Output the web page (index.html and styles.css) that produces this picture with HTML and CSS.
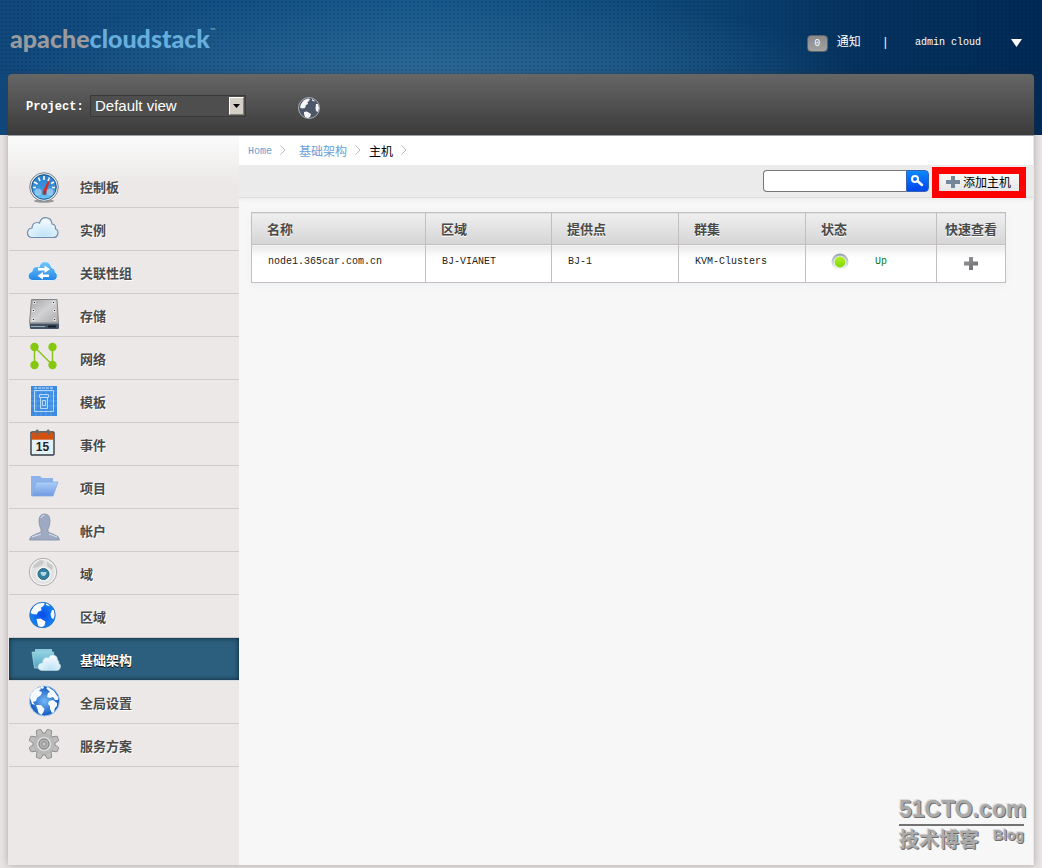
FILE: index.html
```html
<!DOCTYPE html>
<html lang="zh-CN">
<head>
<meta charset="utf-8">
<title>Apache CloudStack</title>
<link rel="stylesheet" href="styles.css">
</head>
<body>
<svg class="defs" width="0" height="0" aria-hidden="true">
  <defs>
    <linearGradient id="gBlue" x1="0" y1="0" x2="0" y2="1"><stop offset="0" stop-color="#2a7cc8"/><stop offset=".6" stop-color="#3f95dc"/><stop offset="1" stop-color="#72cdf8"/></linearGradient>
    <linearGradient id="gMetal" x1="0" y1="0" x2="1" y2="1"><stop offset="0" stop-color="#a5a5a8"/><stop offset=".5" stop-color="#d2d2d5"/><stop offset="1" stop-color="#aaaaad"/></linearGradient>
    <radialGradient id="gCloud" cx=".55" cy=".9" r=".8"><stop offset="0" stop-color="#bfe3f7"/><stop offset="1" stop-color="#f4fafd"/></radialGradient>
    <linearGradient id="gCloudBlue" x1="0" y1="0" x2="0" y2="1"><stop offset="0" stop-color="#74cbfa"/><stop offset="1" stop-color="#2484e6"/></linearGradient>
    <linearGradient id="gFolder" x1="0" y1="0" x2="0" y2="1"><stop offset="0" stop-color="#acd0f8"/><stop offset="1" stop-color="#7099e2"/></linearGradient>
    <linearGradient id="gTeal" x1="0" y1="0" x2="0" y2="1"><stop offset="0" stop-color="#8fd0e0"/><stop offset="1" stop-color="#56a6c1"/></linearGradient>
    <radialGradient id="gGlobe"><stop offset="0" stop-color="#0a4be8"/><stop offset="1" stop-color="#1787f5"/></radialGradient>
    <radialGradient id="gGlobe2"><stop offset="0" stop-color="#75b9f8"/><stop offset="1" stop-color="#1156bd"/></radialGradient>
    <linearGradient id="gRing" x1="0" y1="0" x2="0" y2="1"><stop offset="0" stop-color="#98a3ac"/><stop offset="1" stop-color="#fff"/></linearGradient>
    <linearGradient id="gGreen" x1="0" y1="0" x2="0" y2="1"><stop offset="0" stop-color="#b5f024"/><stop offset="1" stop-color="#7fd908"/></linearGradient>
    <linearGradient id="gPlus" x1="0" y1="0" x2="1" y2="1"><stop offset="0" stop-color="#9a9a9d"/><stop offset="1" stop-color="#68696e"/></linearGradient>
    <path id="tooth" d="M15 7l.8-4q.2-.8 1-.8h2.400q.8 0 1 .8l.8 4z"/>
    <g id="teeth"><use href="#tooth" transform="rotate(22.500 18 17)"/><use href="#tooth" transform="rotate(67.500 18 17)"/><use href="#tooth" transform="rotate(112.500 18 17)"/><use href="#tooth" transform="rotate(157.500 18 17)"/><use href="#tooth" transform="rotate(202.500 18 17)"/><use href="#tooth" transform="rotate(247.500 18 17)"/><use href="#tooth" transform="rotate(292.500 18 17)"/><use href="#tooth" transform="rotate(337.500 18 17)"/></g>
  </defs>
</svg>

<div class="page">
  <header class="header">
    <a class="logo" href="#"><span class="logo-a">apache</span><span class="logo-b">cloudstack</span><span class="logo-tm">™</span></a>
    <div class="user">
      <button class="notify" type="button"><span class="badge">0</span><span class="notify-label">通知</span></button>
      <span class="divider">|</span>
      <button class="account" type="button"><span>admin cloud</span>
        <svg width="11" height="8" viewBox="0 0 11 8" aria-hidden="true"><path d="M0 0h11L5.500 8z" fill="#fff"/></svg>
      </button>
    </div>
  </header>

  <div class="shell">
    <div class="toolbar">
      <label class="project-label" for="project">Project:</label>
      <div class="select-box">
        <select id="project" class="project"><option>Default view</option></select>
        <span class="select-arrow"><svg width="7" height="4" viewBox="0 0 7 4" aria-hidden="true"><path d="M0 0h7L3.500 4z"/></svg></span>
      </div>
      <button class="region" type="button" aria-label="Region">
        <svg width="24" height="24" viewBox="0 0 24 24"><circle cx="12" cy="12" r="10.500" fill="#4c5868" stroke="#a5abb4"/><path d="M4 8l3-4 4-1.500 2 .5-1 2-1.500 1 .5 2-2 1-1 3-3 .5-2-1zM7 16l3-.5 4 2.500-1 3-2 1-3-1-1-3zM19 8l2 0 1 4-1 4-2-1-.500-3zM15 3l3 2-1 .5-2-1z" fill="#f5f6f8"/></svg>
      </button>
    </div>

    <div class="body">
      <nav class="sidebar">
        <ul class="nav">
          <li><a href="#"><svg class="ico" viewBox="0 -2 36 36"><ellipse cx="18" cy="31" rx="10" ry="1.800" fill="#999"/><circle cx="18" cy="17" r="14.300" fill="#e6e9ec" stroke="#7c858e"/><circle cx="18" cy="17" r="12.300" fill="url(#gBlue)" stroke="#19568e"/><path d="M18 6v4M12.500 7.500l1.500 3.500M23.500 7.500L22 11M8 12l3.500 2M7 17.500h3M29 17.500h-3M28 12l-3 1.500" stroke="#fff" stroke-width="1.600"/><circle cx="12" cy="22" r="3.500" fill="#a6d4f4" opacity=".7"/><circle cx="24" cy="22" r="3.500" fill="#a6d4f4" opacity=".7"/><path d="M16.500 22L22 11l1.500.8-3.500 11z" fill="#d72d26"/><circle cx="18.500" cy="23" r="2" fill="#963b45"/></svg><span>控制板</span></a></li>
          <li><a href="#"><svg class="ico" viewBox="0 0 36 36"><path d="M5.500 26.500Q1.500 26 1.500 21.500 2 17.500 6 17q.2-5.500 5.500-5.500 1 0 2 .6Q15 6.500 20 6.700q5.500.6 6 6.300 4 .5 3.500 5 3 1 2.300 5-.8 3.500-4.300 3.500z" fill="url(#gCloud)" stroke="#6f8dad" stroke-width="1.200"/></svg><span>实例</span></a></li>
          <li><a href="#"><svg class="ico" viewBox="0 0 36 36"><path d="M6 26.500Q2 26 2 22q.5-4 4-4.500.5-5 5-5 1 0 2 .6Q14.500 7.500 19 7.500q5.500.5 6.500 6 4 .5 4 5 2.500 1 1.800 4.500-.8 3.500-4 3.500z" fill="url(#gCloudBlue)" stroke="#e5f4fc"/><path d="M12 14h6.500v-2.500L24 15.200 18.500 19v-2.500H12zM23 20.500h-6V18l-5.500 3.700L17 25.500V23h6z" fill="#fff"/></svg><span>关联性组</span></a></li>
          <li><a href="#"><svg class="ico" viewBox="0 0 36 36"><path d="M5.500 2.500h25.500l1.500 23.500h-29z" fill="url(#gMetal)" stroke="#858588"/><path d="M3.500 26.500H33V31q0 1-1 1H5q-1 0-1-1z" fill="#445363"/><path d="M5 29.500h14" stroke="#99abb9"/><path d="M22 29.500h8" stroke="#131d27" stroke-width="2"/><g fill="#fff"><circle cx="8.500" cy="5.500" r="1.500"/><circle cx="27.500" cy="5.500" r="1.500"/><circle cx="7.500" cy="13.500" r="1.500"/><circle cx="28.500" cy="13.500" r="1.500"/><circle cx="7.500" cy="22.500" r="1.500"/><circle cx="28.500" cy="22.500" r="1.500"/></g><g fill="#333"><circle cx="8.500" cy="5.500" r=".8"/><circle cx="27.500" cy="5.500" r=".8"/><circle cx="7.500" cy="13.500" r=".8"/><circle cx="28.500" cy="13.500" r=".8"/><circle cx="7.500" cy="22.500" r=".8"/><circle cx="28.500" cy="22.500" r=".8"/></g></svg><span>存储</span></a></li>
          <li><a href="#"><svg class="ico" viewBox="0 -1 36 36"><path d="M8.500 24V6l18 18V6" fill="none" stroke="#88c51a" stroke-width="1.500"/><g fill="#86c80d"><circle cx="8.500" cy="6" r="4.200"/><circle cx="26.500" cy="6" r="4.200"/><circle cx="8.500" cy="24" r="4.200"/><circle cx="26.500" cy="24" r="4.200"/></g></svg><span>网络</span></a></li>
          <li><a href="#"><svg class="ico" viewBox="-1 -2 36 36"><path d="M4 1h26v30H4z" fill="#3d8ae0"/><path d="M4 6h26M4 11h26M4 16h26M4 21h26M9 1v30M14 1v30M19 1v30M24 1v30" stroke="#64a9ee" stroke-width=".7"/><path d="M7.500 5.500h19v21h-19zM12.500 9.500h9v3h-9zM13.500 12.500h7v11h-7zM15.500 15.500h3v5h-3z" fill="none" stroke="#b5daf8"/><path d="M7 3h20" stroke="#cbe6fb" stroke-dasharray="3 1"/></svg><span>模板</span></a></li>
          <li><a href="#"><svg class="ico" viewBox="-1 -3 36 36"><rect x="4" y="3" width="23" height="23" rx="1" fill="#e4f1f9" stroke="#343c42" stroke-width="1.400"/><path d="M4.700 3.700h21.600v7H4.700z" fill="#d4500e"/><path d="M9 2q2-2 2 1t-2 3M20 2q2-2 2 1t-2 3" fill="none" stroke="#716764" stroke-width="1.600"/><text x="15.500" y="22" text-anchor="middle" class="cal">15</text></svg><span>事件</span></a></li>
          <li><a href="#"><svg class="ico" viewBox="-1 -2 36 36"><path d="M4 5h9l2 2h11v18H4z" fill="#8db3ea"/><path d="M9 11h22l-5 14H5z" fill="url(#gFolder)" stroke="#86aae3" stroke-width=".8"/></svg><span>项目</span></a></li>
          <li><a href="#"><svg class="ico" viewBox="-1 -1 36 36"><path d="M12 8q0-7 5.500-7T23 8q0 5-2 8v3l7 3q4 1 4.500 5h-30Q3 23 7 22l7-3v-3q-2-3-2-8z" fill="#9daac2" stroke="#8290a8" stroke-width=".8"/><path d="M14 5q1-3 3.500-3M5 24l9-3M30 24l-8-3" stroke="#dce2ec" fill="none"/></svg><span>帐户</span></a></li>
          <li><a href="#"><svg class="ico" viewBox="-1 -1 36 36"><circle cx="16" cy="16" r="13.700" fill="#e2e2e2" stroke="#acacac"/><circle cx="16" cy="16" r="12.500" fill="none" stroke="#f6f6f6"/><path d="M7 9l6-5 4 1-2 4-4 2-5 1zM20 6l6 4-1 4-5-4z" fill="#c8c8c8"/><circle cx="16.500" cy="18" r="7.500" fill="#f5f5f5" opacity=".8"/><circle cx="16.500" cy="18" r="5.500" fill="#36809f" stroke="#276780"/><path d="M13.500 16h6q-.5 4-3 4t-3-4z" fill="#b4dbe8"/></svg><span>域</span></a></li>
          <li><a href="#"><svg class="ico" viewBox="-1 -1 36 36"><circle cx="15.500" cy="16" r="13" fill="url(#gGlobe)"/><path d="M4 12l3-5 4-3 5-.5 2 1-2 3-2 1 .5 3-3 1-2 3-4-.5-2-1zM9.500 20l4-.500 5 3-1 4-3 2-3-1-1-3zM25 11l2 0 1 5-1.500 4-2-1-1-4zM19 4l4 2-1 1-3-1z" fill="#f8fbff"/><circle cx="15.500" cy="16" r="12.600" fill="none" stroke="#286db1" stroke-width=".8"/></svg><span>区域</span></a></li>
          <li class="active"><a href="#"><svg class="ico" viewBox="0 -3 36 36"><path d="M9 7V5h17v3H9z" fill="#8ccbdc"/><path d="M6 8h21.500l1.500 16H8.500z" fill="url(#gTeal)" stroke="#9cd6e3" stroke-width=".8"/><path d="M15.500 26.500q-3.500-.5-3.500-4 .5-3.500 4.500-3.500.5-5.500 4.500-5.500 1 0 1.500.5Q24 10.500 27 11q4.500.5 4.500 5 1.500.5 1.500 3.500 2 1 1.500 3.500-.8 3.500-3.500 3.500z" fill="url(#gCloud)" stroke="#b9d6e4" stroke-width=".6"/></svg><span>基础架构</span></a></li>
          <li><a href="#"><svg class="ico" viewBox="-1 0 36 36"><circle cx="17.500" cy="17" r="15" fill="url(#gGlobe2)" stroke="#9fc6ed"/><path d="M4 10l4-5 5-2 1 2-2 2 3 1-1 3-4 3-1 3-3 1 2 3-3-1-2-6zM9 21l5 0 3.500 4-1 3-2 3-3-2-1-4zM19 4l2-1 6 4 4 6 0 3-3 0-2-3-3 1-3-1 1-4 2-1zM22 17l4-1 4 3 0 3-2 2-1 4-2 1-2-4 0-3-2-2zM13 3l3-1 1 2-2 1z" fill="#f5fafe"/></svg><span>全局设置</span></a></li>
          <li><a href="#"><svg class="ico" viewBox="0 0 36 36"><use href="#teeth" fill="#bbb" stroke="#868686" stroke-width="1.600"/><circle cx="18" cy="17" r="11" fill="#bbb" stroke="#868686"/><use href="#teeth" fill="#bdbdbd"/><circle cx="18" cy="17" r="10.500" fill="#b8b8b8"/><circle cx="18" cy="17" r="6.500" fill="none" stroke="#e3e3e3" stroke-width="1.200"/><circle cx="18" cy="17" r="5" fill="#b4b4b4" stroke="#838383"/><circle cx="18" cy="17" r="2.200" fill="#ccc" stroke="#858585"/></svg><span>服务方案</span></a></li>
        </ul>
      </nav>

      <main class="content">
        <nav class="crumbs">
          <a href="#" class="crumb-home">Home</a>
          <svg class="sep" viewBox="0 0 6 10"><path d="M.5 .5L5 5 .5 9.500"/></svg>
          <a href="#">基础架构</a>
          <svg class="sep" viewBox="0 0 6 10"><path d="M.5 .5L5 5 .5 9.500"/></svg>
          <span class="current">主机</span>
          <svg class="sep" viewBox="0 0 6 10"><path d="M.5 .5L5 5 .5 9.500"/></svg>
        </nav>
        <div class="actions">
          <form class="search">
            <input class="search-input" type="text" aria-label="搜索">
            <button class="search-btn" type="button" aria-label="搜索"><svg width="14" height="14" viewBox="0 0 14 14"><circle cx="5" cy="5" r="3" fill="none" stroke="#fff" stroke-width="2"/><path d="M7.500 7L12 11" stroke="#fff" stroke-width="2.500" stroke-linecap="round"/></svg></button>
          </form>
          <div class="highlight">
            <button class="add" type="button"><svg width="14" height="12" viewBox="0 0 14 12"><path d="M5 0h4v4h5v4H9v4H5V8H0V4h5z" fill="#75879b"/></svg><span>添加主机</span></button>
          </div>
        </div>
        <table class="grid">
          <colgroup><col><col class="c-zone"><col class="c-pod"><col class="c-pod"><col class="c-state"><col class="c-view"></colgroup>
          <thead><tr><th>名称</th><th>区域</th><th>提供点</th><th>群集</th><th>状态</th><th class="view">快速查看</th></tr></thead>
          <tbody><tr>
            <td>node1.365car.com.cn</td><td>BJ-VIANET</td><td>BJ-1</td><td>KVM-Clusters</td>
            <td><div class="state"><svg width="18" height="18" viewBox="0 0 18 18"><circle cx="9" cy="9" r="8.500" fill="url(#gRing)"/><circle cx="9" cy="9" r="6.200" fill="#e6eee4"/><circle cx="9" cy="9" r="5.400" fill="url(#gGreen)"/></svg><span>Up</span></div></td>
            <td class="view"><button class="quick" type="button" aria-label="快速查看"><svg width="14" height="13" viewBox="0 0 14 13"><path d="M5 0h4v4.500h5v4H9V13H5V8.500H0v-4h5z" fill="url(#gPlus)"/></svg></button></td>
          </tr></tbody>
        </table>
      </main>
    </div>
  </div>
</div>

<div class="watermark">
  <div class="wm-top">51CTO.com</div>
  <div class="wm-bottom"><span class="wm-cn">技术博客</span><span class="wm-blog">Blog</span></div>
</div>
</body>
</html>
```

FILE: styles.css
```css
* { box-sizing: border-box; }

body {
  margin: 0;
  background: #e8e4e4;
  color: #222;
  font: 12px/16px "Liberation Mono", "Noto Sans CJK SC", monospace;
}

a { text-decoration: none; color: inherit; }
button { border: 0; padding: 0; background: none; color: inherit; font: inherit; cursor: pointer; }
svg { display: block; flex: none; }
.defs { position: absolute; }

.page {
  display: flex;
  flex-direction: column;
  min-height: 100vh;
  padding-bottom: 3px;
  background:
    radial-gradient(ellipse 430px 90px at 41% 80px, rgba(62, 120, 162, .6), transparent) 0 0 / 100% 135px no-repeat,
    linear-gradient(90deg, #10487c, #14568a 40%, #0e4a7b 62%, #05335f 82%, #002a56) 0 0 / 100% 135px no-repeat;
}

/* Header */
.header {
  display: flex;
  justify-content: space-between;
  align-items: center;
  height: 74px;
  padding: 11px 20px 0 10px;
  color: #fff;
  background: radial-gradient(circle, rgba(0, 20, 50, .16) 1px, transparent 1px) 0 0 / 4px 4px;
}
.logo { display: flex; align-items: flex-start; font: 900 25px/32px Lato, sans-serif; padding-bottom: 9px; }
.logo-a { color: #9a9b9e; }
.logo-b { color: #68aedd; }
.logo-tm { color: #7795ac; font-size: 7px; line-height: 16px; }

.user { display: flex; align-items: center; padding-top: 1px; }
.notify { display: flex; align-items: center; gap: 9px; }
.badge {
  width: 21px;
  height: 17px;
  border: 1px solid #5f6367;
  border-radius: 4px;
  background: linear-gradient(#8a8a8a, #a2a2a2);
  font-size: 10px;
  line-height: 15px;
  text-align: center;
}
.divider { margin: 0 26px 0 21px; }
.account { display: flex; align-items: center; gap: 30px; font-size: 10px; }

/* Shell */
.shell { display: flex; flex-direction: column; flex: 1; margin: 0 8px; box-shadow: 0 0 7px rgba(60, 50, 50, .35); border-radius: 4px 4px 0 0; }
.toolbar {
  display: flex;
  align-items: center;
  height: 62px;
  padding: 2px 18px 0;
  border-bottom: 1px solid #9ba0a4;
  border-radius: 4px 4px 0 0;
  background: linear-gradient(#666, #3b3b3b);
  color: #fff;
}
.project-label { width: 64px; padding-top: 2px; font-size: 12px; font-weight: 700; }
.select-box { position: relative; width: 156px; height: 22px; }
.project {
  width: 100%;
  height: 100%;
  padding: 0 20px 0 4px;
  appearance: none;
  border: 1px solid #393939;
  border-radius: 0;
  background: #4e4e4e;
  color: #fff;
  font: 15px/20px "Liberation Sans", Arial, sans-serif;
}
.select-arrow {
  position: absolute;
  top: 2px;
  right: 2px;
  bottom: 2px;
  display: grid;
  place-items: center;
  width: 15px;
  border: 1px solid;
  border-color: #fff #85817a #85817a #fff;
  background: #d4d0c8;
  pointer-events: none;
}
.region { margin: 4px 0 0 51px; }

.body { display: flex; flex: 1; padding-right: 1px; background: #ebe8e8; }

/* Navigation */
.sidebar {
  width: 231px;
  flex: none;
  padding: 29px 0 0 1px;
  background: linear-gradient(#fbfbfb, #ebe8e7 48px);
}
.nav { margin: 0; padding: 0; list-style: none; }
.nav li { height: 43px; border-bottom: 1px solid #cdcdcd; }
.nav a {
  display: flex;
  align-items: center;
  gap: 18px;
  height: 100%;
  padding-left: 17px;
  color: #4a4a4a;
  font: 700 13px/20px "Noto Sans CJK SC", sans-serif;
  text-shadow: 1px 1px #fff;
}
.nav span { padding-top: 2px; }
.ico { width: 36px; height: 36px; }
.cal { font: 700 12px "Liberation Sans", sans-serif; fill: #222; text-shadow: none; }
.nav .active { border-color: #d6dde1; }
.nav .active a { background: #2c5f7d; box-shadow: inset 0 0 5px #0a2433; color: #fff; text-shadow: 0 1px 1px #000; }

/* Content */
.content { flex: 1; min-width: 0; background: #f7f7f7; }
.crumbs {
  display: flex;
  align-items: center;
  height: 29px;
  padding-left: 9px;
  background: #fff;
  color: #68a1d5;
  font: 12px/18px "Noto Sans CJK SC", sans-serif;
}
.crumbs .crumb-home { font: 10px/14px "Liberation Mono", monospace; padding-top: 2px; }
.sep { width: 6px; height: 10px; margin: 0 8px 2px; }
.crumb-home + .sep { margin-right: 13px; }
.sep path { fill: none; stroke: #bbb; }
.current { color: #000; }

.actions {
  display: flex;
  justify-content: flex-end;
  align-items: center;
  gap: 3px;
  height: 33px;
  padding-right: 7px;
  border-bottom: 1px solid #dedede;
  background: #ebebeb;
  box-shadow: 0 2px 3px #ececec;
}
.search { display: flex; height: 22px; }
.search-input {
  width: 143px;
  border: 1px solid #77777a;
  border-right: 0;
  border-radius: 4px 0 0 4px;
  padding: 0 4px;
  background: #fff;
}
.search-btn { display: grid; place-items: center; width: 23px; border: 1px solid #3465b4; border-radius: 0 4px 4px 0; background: linear-gradient(#0c89ff, #0045ec); }
.highlight { background: #f00; padding: 7px; margin-top: 2px; }
.add {
  display: flex;
  align-items: center;
  gap: 3px;
  height: 17px;
  padding: 0 8px 0 7px;
  background: linear-gradient(#f7f7f7, #e7e7e7);
  color: #000;
  font: 12px/16px "Noto Sans CJK SC", sans-serif;
}

/* Hosts table */
.grid {
  width: calc(100% - 39px);
  margin: 14px 0 0 12px;
  table-layout: fixed;
  border-collapse: collapse;
  background: #fff;
  box-shadow: 0 2px 8px #eceff1;
}
.c-zone { width: 126px; }
.c-pod { width: 127px; }
.c-state { width: 131px; }
.c-view { width: 69px; }
.grid th, .grid td { border: 1px solid #c3bfc0; text-align: left; padding: 0 0 0 15px; }
.grid th {
  height: 32px;
  background: linear-gradient(#efefef, #d5d5d5);
  color: #4a4a4a;
  font: 700 13px/20px "Noto Sans CJK SC", sans-serif;
  text-shadow: 0 1px #fff;
  white-space: nowrap;
}
.grid td {
  height: 38px;
  padding: 0 0 4px 16px;
  background: linear-gradient(#e9e9ea, #fff 12px);
  font-size: 10px;
}
.grid .view { padding: 0; text-align: center; }
.state { display: flex; align-items: center; gap: 26px; padding-left: 9px; color: #087812; }
.quick { display: inline-block; padding-top: 6px; }

/* Watermark */
.watermark { position: absolute; right: 18px; bottom: 16px; width: 125px; color: #aaa; text-shadow: 1px 1px #6f6f6f, -1px -1px #ddd; pointer-events: none; }
.wm-top { border-bottom: 2px solid #737373; font: 700 23px/30px "Liberation Sans", Arial, sans-serif; white-space: nowrap; }
.wm-bottom { display: flex; justify-content: space-between; }
.wm-cn { font: 700 20px/26px "Noto Sans CJK SC", sans-serif; }
.wm-blog { font: 700 14px/18px "Liberation Sans", sans-serif; }
```
